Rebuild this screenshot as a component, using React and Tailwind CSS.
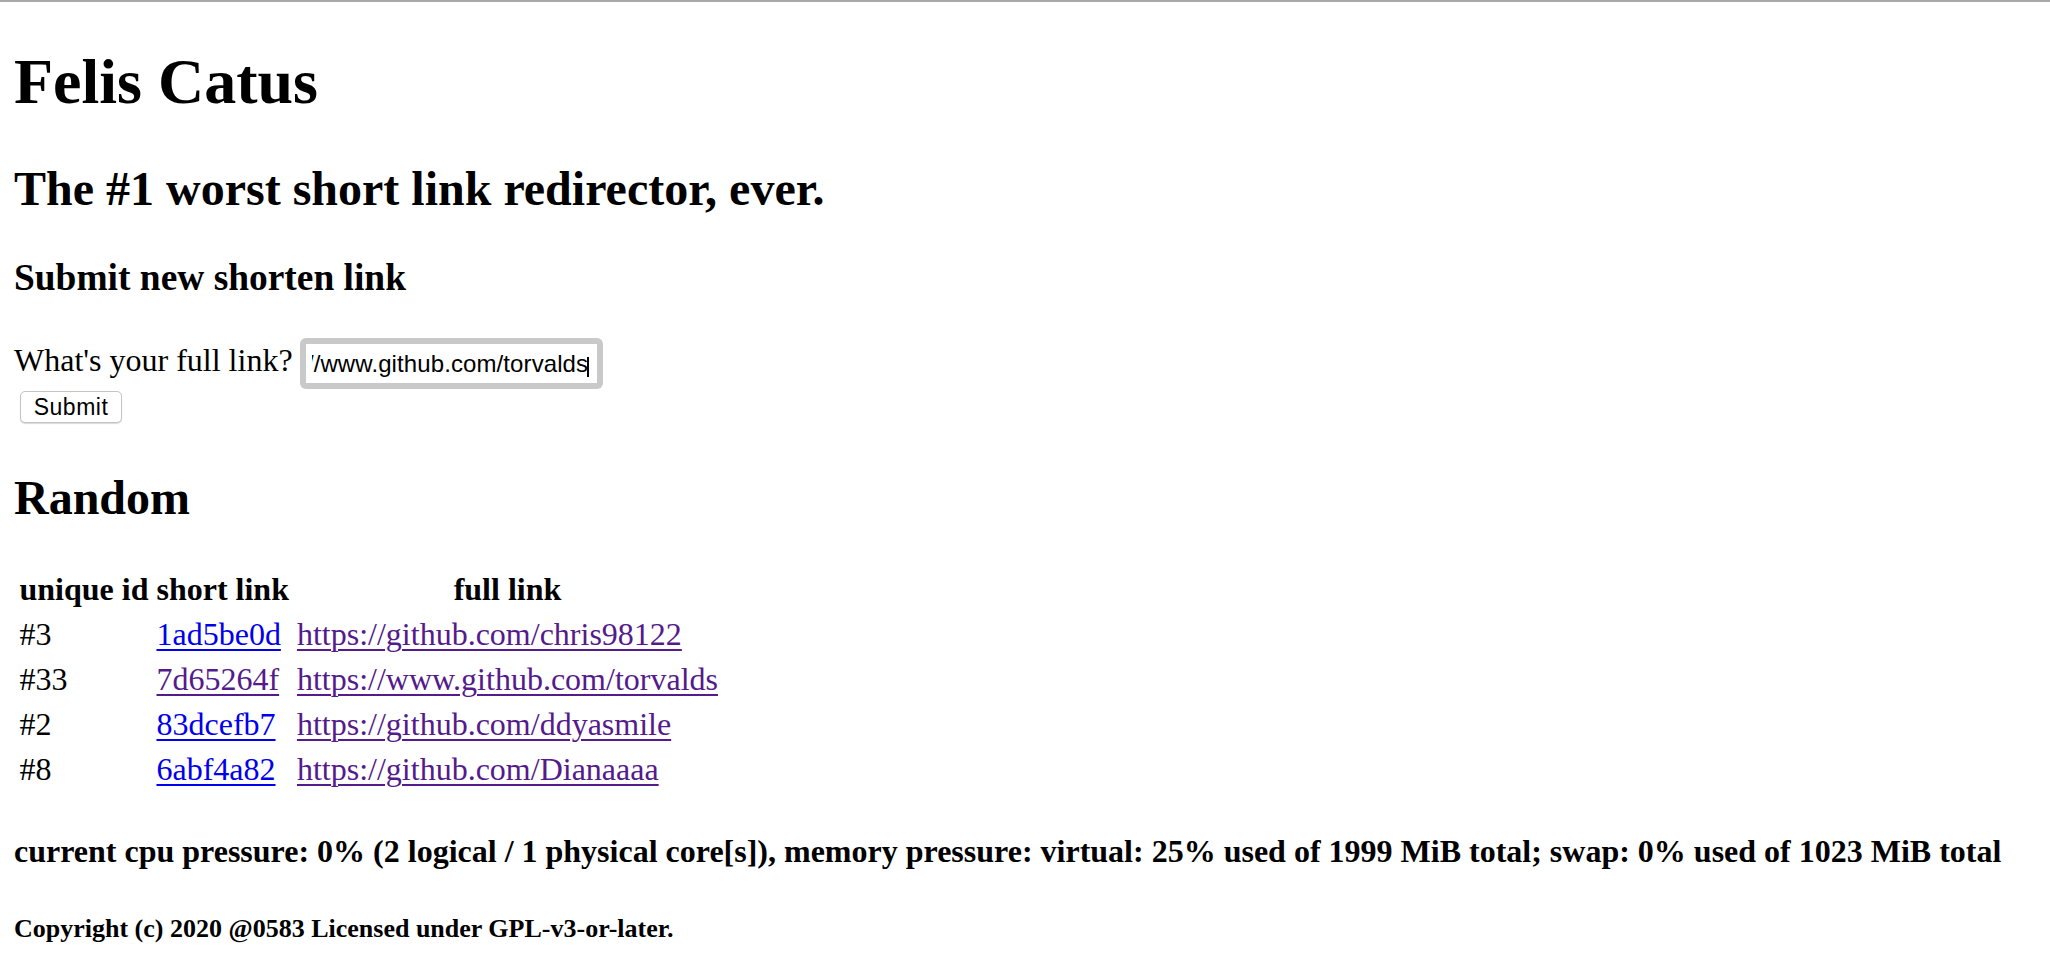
import { useEffect, useRef } from "react";

const rows = [
    { id: "#3", short: "1ad5be0d", full: "https://github.com/chris98122", visited: false },
    { id: "#33", short: "7d65264f", full: "https://www.github.com/torvalds", visited: true },
    { id: "#2", short: "83dcefb7", full: "https://github.com/ddyasmile", visited: false },
    { id: "#8", short: "6abf4a82", full: "https://github.com/Dianaaaa", visited: false },
];

function LinkInput() {
    const inputRef = useRef(null);

    useEffect(() => {
        // keep the end of the url in view, like a focused field after typing
        if (inputRef.current) inputRef.current.scrollLeft = inputRef.current.scrollWidth;
    }, []);

    return (
        <div className="relative ml-[7px] rounded-[6px] bg-[#c9c9c9] p-[6px]">
            <input
                ref={inputRef}
                type="text"
                readOnly
                defaultValue="https://www.github.com/torvalds"
                className="block h-[39px] w-[291px] bg-white pl-[6px] pr-[8px] font-['Liberation_Sans',Arial,sans-serif] text-[24px] tracking-[0.1px] text-black outline-none"
            />
            <span className="absolute left-[287px] top-[19px] h-[20px] w-[2px] bg-black" />
        </div>
    );
}

function App() {
    return (
        <div className="min-h-screen border-t-2 border-[#a8a8a8] bg-white px-[14px] font-['Liberation_Serif','Times_New_Roman',serif] text-[32px] leading-[normal] text-black">
            <h1 className="mt-[42.5px] text-[64px] font-bold leading-[normal]">Felis Catus</h1>
            <h2 className="mt-[42px] text-[48px] font-bold leading-[normal]">The #1 worst short link redirector, ever.</h2>
            <h3 className="mt-[40.5px] text-[37.44px] font-bold leading-[normal]">Submit new shorten link</h3>

            <form className="mt-[39px]" onSubmit={(e) => e.preventDefault()}>
                <div className="flex items-start">
                    <label className="mt-[3.8px] whitespace-nowrap">What's your full link?</label>
                    <LinkInput />
                </div>
                <button
                    type="submit"
                    className="ml-[6px] mt-[2px] flex h-[32px] w-[102px] items-center justify-center rounded-[5px] border border-[#c4c4c4] bg-white font-['Liberation_Sans',Arial,sans-serif] text-[23px] leading-none tracking-[0.5px] text-black shadow-[0_1px_1px_rgba(0,0,0,0.15)]"
                >
                    Submit
                </button>
            </form>

            <h2 className="mt-[47.2px] text-[48px] font-bold leading-[normal]">Random</h2>

            <table className="mt-[39.84px] border-separate border-spacing-[4px] -ml-[0.5px]">
                <thead>
                    <tr>
                        <th className="p-[2px] text-center font-bold">unique id</th>
                        <th className="p-[2px] text-center font-bold">short link</th>
                        <th className="p-[2px] text-center font-bold">full link</th>
                    </tr>
                </thead>
                <tbody>
                    {rows.map((row) => (
                        <tr key={row.id}>
                            <td className="p-[2px]">{row.id}</td>
                            <td className="p-[2px]">
                                <a
                                    href="#"
                                    className={`underline decoration-2 underline-offset-[4px] ${row.visited ? "text-[#551a8b]" : "text-[#0000ee]"}`}
                                >
                                    {row.short}
                                </a>
                            </td>
                            <td className="p-[2px]">
                                <a href="#" className="text-[#551a8b] underline decoration-2 underline-offset-[4px]">
                                    {row.full}
                                </a>
                            </td>
                        </tr>
                    ))}
                </tbody>
            </table>

            <h4 className="mt-[38.5px] text-[32px] font-bold leading-[normal]">
                current cpu pressure: 0% (2 logical / 1 physical core[s]), memory pressure: virtual: 25% used of 1999 MiB total; swap: 0% used of 1023 MiB total
            </h4>
            <h5 className="mt-[44.35px] pb-[40px] text-[26px] font-bold leading-[normal]">
                Copyright (c) 2020 @0583 Licensed under GPL-v3-or-later.
            </h5>
        </div>
    );
}

export default App;
